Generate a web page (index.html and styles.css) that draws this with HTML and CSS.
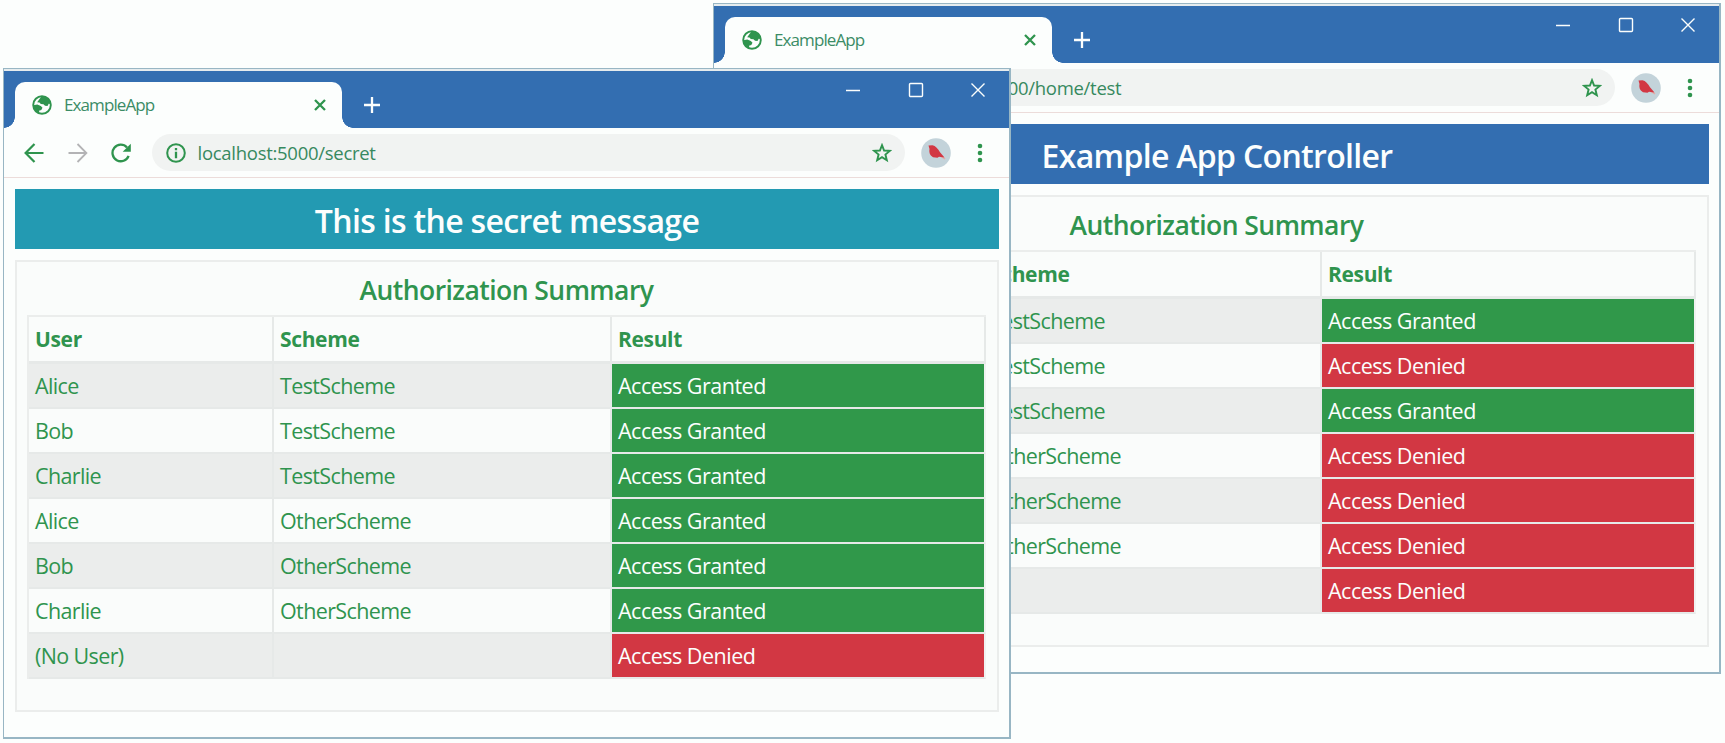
FILE: index.html
```
<!DOCTYPE html>
<html lang="en">
<head>
<meta charset="utf-8">
<title>ExampleApp</title>
<link rel="stylesheet" href="styles.css">
</head>
<body>
<svg class="defs" width="0" height="0" aria-hidden="true">
  <symbol id="globe" viewBox="0 0 20 20"><circle cx="10" cy="10" r="8.8" fill="#fcfefd" stroke="currentColor" stroke-width="1.9"/><path d="M9.500 1.500 7.500 4 5.200 7.200l2.300.3 1.300 1.500 2.700.2 1.500 1.500 2.500.3 1.200-2.200 2.500.2C18.500 5 15 1.500 9.500 1.500zM1.300 10.200l4-.6 3.500 1.400 1.700 1.700-1.200 2.300-2.300.8.500 2.700C4 17.500 1.500 14 1.300 10.200z" fill="currentColor"/></symbol>
  <symbol id="cross" viewBox="0 0 14 14"><path d="M2 2l10 10M12 2L2 12" fill="none" stroke="currentColor" stroke-width="2.3"/></symbol>
  <symbol id="plus" viewBox="0 0 18 18"><path d="M9 1v16M1 9h16" fill="none" stroke="currentColor" stroke-width="2.3"/></symbol>
  <symbol id="min" viewBox="0 0 16 16"><path d="M1 8.500h14" fill="none" stroke="currentColor" stroke-width="1.500"/></symbol>
  <symbol id="max" viewBox="0 0 16 16"><rect x="1.500" y="1.500" width="13" height="13" rx="1" fill="none" stroke="currentColor" stroke-width="1.400"/></symbol>
  <symbol id="close" viewBox="0 0 16 16"><path d="M1.500 1.500l13 13M14.500 1.500l-13 13" fill="none" stroke="currentColor" stroke-width="1.400"/></symbol>
  <symbol id="back" viewBox="0 0 20 20"><path d="M19.500 10H2M10.500 1L1.600 10l8.900 9" fill="none" stroke="currentColor" stroke-width="2.200"/></symbol>
  <symbol id="forward" viewBox="0 0 20 20"><path d="M.5 10H18M9.500 1l8.900 9-8.900 9" fill="none" stroke="currentColor" stroke-width="1.800"/></symbol>
  <symbol id="reload" viewBox="0 0 20 20"><path d="M17.600 12.800A8.300 8.300 0 1 1 16 4.400" fill="none" stroke="currentColor" stroke-width="2.300"/><path d="M19.800.7v8.100h-8.100z" fill="currentColor"/></symbol>
  <symbol id="info" viewBox="0 0 20 20"><circle cx="10" cy="10" r="8.800" fill="none" stroke="currentColor" stroke-width="2"/><path d="M10 5v2.300M10 8.800v6.400" stroke="currentColor" stroke-width="2.300"/></symbol>
  <symbol id="star" viewBox="0 0 20 20"><path d="M10 2.200l2.100 5.300 5.700.4-4.400 3.700 1.400 5.600-4.800-3.100-4.800 3.100 1.400-5.600-4.400-3.700 5.700-.4z" fill="none" stroke="currentColor" stroke-width="1.900"/></symbol>
  <symbol id="dots" viewBox="0 0 6 20"><circle cx="3" cy="3" r="2.300"/><circle cx="3" cy="10" r="2.300"/><circle cx="3" cy="17" r="2.300"/></symbol>
  <symbol id="avatar" viewBox="0 0 30 30"><circle cx="15" cy="15" r="14.800" fill="#c3d3da"/><path d="M18 17l6 4-2-1.500z" fill="#e3a9a5" stroke="#e3a9a5" stroke-width="1.500"/><path d="M7.500 7.500l4-.3c3 .5 5.500 3.500 7.500 7l4.500 5.300-5.500-.8-1.500 1-4.500-.5C8.500 17 8 14 8.500 11z" fill="#d23743"/></symbol>
</svg>

<main class="desktop">
  <section class="window window-rear">
    <header class="titlebar">
      <div class="tab">
        <svg class="favicon"><use href="#globe"/></svg>
        <span class="tab-title">ExampleApp</span>
        <svg class="tab-close"><use href="#cross"/></svg>
      </div>
      <svg class="new-tab"><use href="#plus"/></svg>
      <div class="controls">
        <svg><use href="#min"/></svg><svg><use href="#max"/></svg><svg><use href="#close"/></svg>
      </div>
    </header>
    <nav class="toolbar">
      <svg class="nav-icon"><use href="#back"/></svg>
      <svg class="nav-icon muted"><use href="#forward"/></svg>
      <svg class="nav-icon"><use href="#reload"/></svg>
      <div class="omnibox">
        <svg class="info"><use href="#info"/></svg>
        <span class="url">localhost:5000/home/test</span>
        <svg class="star"><use href="#star"/></svg>
      </div>
      <svg class="avatar"><use href="#avatar"/></svg>
      <svg class="dots"><use href="#dots"/></svg>
    </nav>
    <div class="page">
      <h1 class="banner banner-primary">Example App Controller</h1>
      <div class="panel">
        <h2 class="caption">Authorization Summary</h2>
        <div class="grid">
          <div class="row head"><b></b><b>Scheme</b><b>Result</b></div>
          <div class="row"><span></span><span>TestScheme</span><span class="granted">Access Granted</span></div>
          <div class="row"><span></span><span>TestScheme</span><span class="denied">Access Denied</span></div>
          <div class="row"><span></span><span>TestScheme</span><span class="granted">Access Granted</span></div>
          <div class="row"><span></span><span>OtherScheme</span><span class="denied">Access Denied</span></div>
          <div class="row"><span></span><span>OtherScheme</span><span class="denied">Access Denied</span></div>
          <div class="row"><span></span><span>OtherScheme</span><span class="denied">Access Denied</span></div>
          <div class="row"><span></span><span></span><span class="denied">Access Denied</span></div>
        </div>
      </div>
    </div>
  </section>

  <section class="window window-front">
    <header class="titlebar">
      <div class="tab">
        <svg class="favicon"><use href="#globe"/></svg>
        <span class="tab-title">ExampleApp</span>
        <svg class="tab-close"><use href="#cross"/></svg>
      </div>
      <svg class="new-tab"><use href="#plus"/></svg>
      <div class="controls">
        <svg><use href="#min"/></svg><svg><use href="#max"/></svg><svg><use href="#close"/></svg>
      </div>
    </header>
    <nav class="toolbar">
      <svg class="nav-icon"><use href="#back"/></svg>
      <svg class="nav-icon muted"><use href="#forward"/></svg>
      <svg class="nav-icon"><use href="#reload"/></svg>
      <div class="omnibox">
        <svg class="info"><use href="#info"/></svg>
        <span class="url">localhost:5000/secret</span>
        <svg class="star"><use href="#star"/></svg>
      </div>
      <svg class="avatar"><use href="#avatar"/></svg>
      <svg class="dots"><use href="#dots"/></svg>
    </nav>
    <div class="page">
      <h1 class="banner banner-info">This is the secret message</h1>
      <div class="panel">
        <h2 class="caption">Authorization Summary</h2>
        <div class="grid">
          <div class="row head"><b>User</b><b>Scheme</b><b>Result</b></div>
          <div class="row"><span>Alice</span><span>TestScheme</span><span class="granted">Access Granted</span></div>
          <div class="row"><span>Bob</span><span>TestScheme</span><span class="granted">Access Granted</span></div>
          <div class="row"><span>Charlie</span><span>TestScheme</span><span class="granted">Access Granted</span></div>
          <div class="row"><span>Alice</span><span>OtherScheme</span><span class="granted">Access Granted</span></div>
          <div class="row"><span>Bob</span><span>OtherScheme</span><span class="granted">Access Granted</span></div>
          <div class="row"><span>Charlie</span><span>OtherScheme</span><span class="granted">Access Granted</span></div>
          <div class="row"><span>(No User)</span><span></span><span class="denied">Access Denied</span></div>
        </div>
      </div>
    </div>
  </section>
</main>
</body>
</html>
```
FILE: styles.css
```
* { box-sizing: border-box; }
body {
  margin: 0;
  background: #fcfefd;
  color: #2f944e;
  font-family: "Open Sans", "Noto Sans", sans-serif;
  overflow: hidden;
}
.defs { position: absolute; }
.desktop { position: relative; width: 1725px; height: 743px; overflow: hidden; }
.window {
  position: absolute;
  width: 1008px;
  height: 671px;
  border: 1px solid #98b6c4;
  border-right-width: 2px;
  border-bottom-width: 2px;
  background: #fcfefd;
}
.window-rear { left: 713px; top: 3px; }
.window-front { left: 3px; top: 68px; }

.titlebar {
  display: flex;
  height: 59px;
  border-top: 2px solid #e6ecee;
  background: #336eb1;
  color: #fcfefd;
}
.tab {
  position: relative;
  display: flex;
  align-items: center;
  width: 327px;
  height: 46px;
  margin: 11px 0 0 11px;
  padding: 0 15px 1px 17px;
  border-radius: 10px 10px 0 0;
  background: #fcfefd;
  color: #2f944e;
}
.tab::before, .tab::after {
  content: "";
  position: absolute;
  bottom: 0;
  width: 11px;
  height: 11px;
}
.tab::before { left: -11px; background: radial-gradient(circle at 0 0, transparent 10.5px, #fcfefd 11px); }
.tab::after { right: -11px; background: radial-gradient(circle at 100% 0, transparent 10.5px, #fcfefd 11px); }
.favicon { width: 20px; height: 20px; margin-right: 12px; }
.tab-title { flex: 1; font-size: 17px; letter-spacing: -0.9px; color: #3b8c66; }
.tab-close { width: 14px; height: 14px; }
.new-tab { width: 18px; height: 18px; margin: 25px 0 0 21px; }
.controls { display: flex; gap: 46.5px; margin: 11px 23px 0 auto; }
.controls svg { width: 16px; height: 16px; }

.toolbar {
  display: flex;
  align-items: center;
  height: 50px;
  padding: 0 26px 0 20px;
  border-bottom: 1px solid #ecdcda;
}
.nav-icon { width: 20px; height: 20px; margin-right: 23.500px; }
.nav-icon.muted { color: #b3b3b5; }
.omnibox {
  display: flex;
  align-items: center;
  flex: 1;
  height: 37px;
  margin: 0 16px 0 -3px;
  padding: 0 13px 0 14px;
  border-radius: 19px;
  background: #f1f3f2;
}
.info { width: 20px; height: 20px; margin-right: 12px; }
.url { flex: 1; font-size: 18.500px; letter-spacing: -0.280px; color: #37895f; }
.star { width: 20px; height: 20px; }
.avatar { width: 30px; height: 30px; margin-right: 26px; }
.dots { width: 6px; height: 20px; fill: #2f944e; }

.page { padding: 11px 10px 0 11px; }
.banner {
  height: 60px;
  margin: 0 0 11px;
  color: #fcfefd;
  font-size: 32px;
  font-weight: 600;
  letter-spacing: -0.67px;
  line-height: 64px;
  text-align: center;
}
.banner-primary { background: #336eb1; }
.banner-info { background: #239ab2; }
.panel {
  height: 452px;
  padding: 0 11px 0 10px;
  border: 2px solid #ebedec;
  background: #fafcfb;
}
.caption {
  height: 53px;
  margin: 0;
  font-size: 26.5px;
  font-weight: 600;
  letter-spacing: -0.55px;
  line-height: 56px;
  text-align: center;
}
.grid {
  border: 2px solid #ebedec;
  border-width: 2px 0 0 2px;
  font-size: 21.500px;
  letter-spacing: -0.620px;
}
.row {
  display: grid;
  grid-template-columns: 245px 338px 1fr;
  height: 45px;
}
.row > * {
  height: 45px;
  padding-left: 6px;
  border: 0 solid #e6e9e8;
  border-width: 0 2px 2px 0;
  line-height: 43px;
  white-space: nowrap;
}
.row.head { height: 47px; font-size: 21px; letter-spacing: -0.350px; }
.row.head > * { height: 47px; border-bottom-width: 3px; line-height: 44px; }
.row:nth-child(even) { background: #ebedec; }
.row > .granted, .row > .denied {
  border-right-color: #f0f2f1;
  color: #fcfefd;
  letter-spacing: -0.500px;
  background-clip: padding-box;
}
.row > .granted { background-color: #30984a; }
.row > .denied { background-color: #d23743; }
```
